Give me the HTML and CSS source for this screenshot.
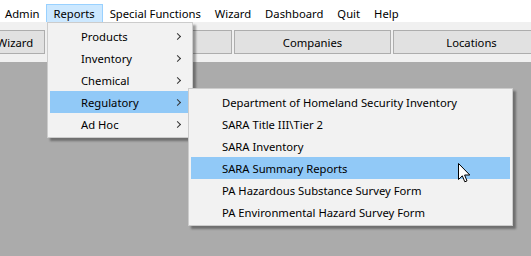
FILE: index.html
```html
<!DOCTYPE html>
<html lang="en">
<head>
    <meta charset="UTF-8">
    <title>Reports menu</title>
    <link rel="stylesheet" href="styles.css">
</head>
<body>
    <div class="menubar">
        <span class="menu-item">Admin</span>
        <span class="menu-item open">Reports</span>
        <span class="menu-item">Special Functions</span>
        <span class="menu-item">Wizard</span>
        <span class="menu-item">Dashboard</span>
        <span class="menu-item">Quit</span>
        <span class="menu-item">Help</span>
    </div>

    <div class="toolbar">
        <div class="tool-button first">Wizard</div>
        <div class="tool-button wide"></div>
        <div class="tool-button">Companies</div>
        <div class="tool-button">Locations</div>
    </div>

    <div class="workspace"></div>

    <!-- Reports dropdown -->
    <div class="popup reports-menu">
        <div class="popup-item">Products <span class="chev"></span></div>
        <div class="popup-item">Inventory <span class="chev"></span></div>
        <div class="popup-item">Chemical <span class="chev"></span></div>
        <div class="popup-item active">Regulatory <span class="chev"></span></div>
        <div class="popup-item">Ad Hoc <span class="chev"></span></div>
    </div>

    <!-- Regulatory submenu -->
    <div class="popup regulatory-menu">
        <div class="popup-item">Department of Homeland Security Inventory</div>
        <div class="popup-item">SARA Title III\Tier 2</div>
        <div class="popup-item">SARA Inventory</div>
        <div class="popup-item active">SARA Summary Reports</div>
        <div class="popup-item">PA Hazardous Substance Survey Form</div>
        <div class="popup-item">PA Environmental Hazard Survey Form</div>
    </div>

    <svg class="cursor" width="13" height="21" viewBox="0 0 13 21">
        <path d="M0.5 0.5 L0.5 16.5 L4.3 12.8 L6.8 18.8 L9 17.9 L6.6 12 L11.8 12 Z" fill="#fff" stroke="#000" stroke-width="1" stroke-linejoin="miter"/>
    </svg>
</body>
</html>
```

FILE: styles.css
```css
body {
    margin: 0;
    font-family: "Noto Sans", "Open Sans", sans-serif;
    font-size: 11.25px;
    color: #000;
    width: 531px;
    height: 256px;
    overflow: hidden;
    position: relative;
    background-color: #ababab;
}
.menubar {
    display: flex;
    height: 22px;
    background-color: #fff;
    align-items: flex-end;
}
.menu-item {
    display: flex;
    align-items: center;
    height: 18px;
    padding: 0 6px;
    border: 1px solid transparent;
    border-bottom: none;
    box-sizing: border-box;
}
.menu-item:first-child {
    padding-left: 4px;
}
.menu-item.open {
    padding-right: 7px;
    background-color: #cce8ff;
    border-color: #99d1ff;
}
.toolbar {
    display: flex;
    gap: 2px;
    height: 40px;
    padding-top: 8px;
    box-sizing: border-box;
    background-color: #f0f0f0;
    overflow: hidden;
}
.tool-button {
    flex: none;
    width: 157px;
    height: 24px;
    display: flex;
    align-items: center;
    justify-content: center;
    background-color: #e1e1e1;
    border: 1px solid #adadad;
    box-sizing: border-box;
}
.tool-button.first {
    width: 60px;
    margin-left: -15px;
}
.tool-button.wide {
    width: 185px;
}
.workspace {
    height: 194px;
    background-color: #ababab;
}
.popup {
    position: absolute;
    background-color: #f2f2f2;
    border: 1px solid #cccccc;
    padding: 2px;
    box-shadow: 3px 3px 2px rgba(0, 0, 0, 0.35);
}
.popup-item {
    display: flex;
    align-items: center;
    height: 22px;
    padding-left: 31px;
    padding-right: 8px;
}
.popup-item.active {
    background-color: #91c9f7;
}
.chev {
    margin-left: auto;
    width: 4px;
    height: 4px;
    border-right: 1px solid #333;
    border-top: 1px solid #333;
    transform: rotate(45deg);
}
.reports-menu {
    left: 47px;
    top: 22px;
    width: 140px;
}
.reports-menu .popup-item {
    padding-right: 10px;
}
.regulatory-menu {
    left: 188px;
    top: 88px;
    width: 319px;
}
.cursor {
    position: absolute;
    left: 458px;
    top: 163px;
}
```
